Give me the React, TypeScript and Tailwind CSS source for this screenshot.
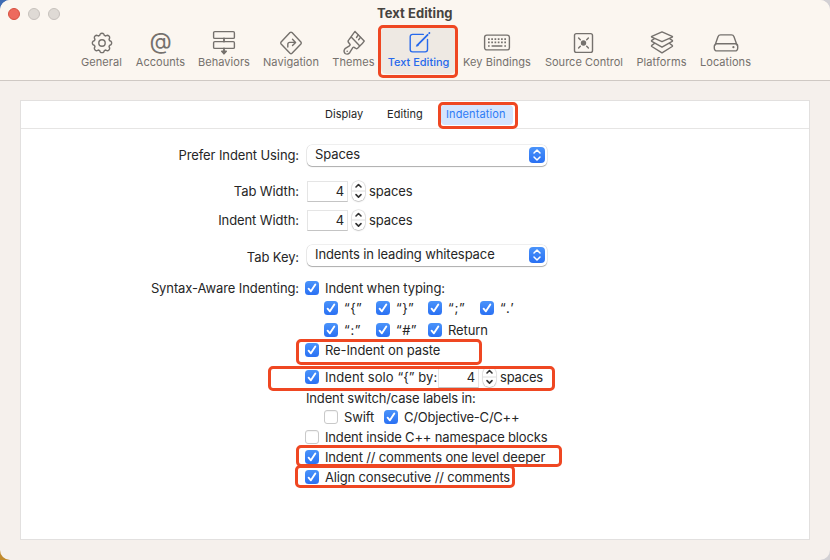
import type { ReactNode } from "react";

const icons: Record<string, ReactNode> = {
  General: (
    <>
      <path d="M12.42 4.98A2.1 2.1 0 0 1 15.58 4.98L16 6.1L17.1 6.55L18.3 6A2.1 2.1 0 0 1 20.5 8.2L19.95 9.4L20.4 10.5L21.55 11A2.1 2.1 0 0 1 21.55 14L20.4 14.5L19.95 15.6L20.5 16.8A2.1 2.1 0 0 1 18.3 19L17.1 18.45L16 18.9L15.5 20.05A2.1 2.1 0 0 1 12.5 20.05L12 18.9L10.9 18.45L9.7 19A2.1 2.1 0 0 1 7.5 16.8L8.05 15.6L7.6 14.5L6.45 14A2.1 2.1 0 0 1 6.45 11L7.6 10.5L8.05 9.4L7.5 8.2A2.1 2.1 0 0 1 9.7 6L10.9 6.55L12 6.1Z" transform="translate(0 .5) translate(14 12.5) scale(1.18) translate(-14 -12.5)" strokeWidth="1.2" />
      <circle cx="14" cy="13" r="3.2" />
    </>
  ),
  Behaviors: (
    <>
      <rect x="3.6" y="1.6" width="20.8" height="6.8" rx="1.2" />
      <rect x="3.6" y="11.6" width="20.8" height="6.8" rx="1.2" />
      <path d="M14 8.5v3M14 18.5v3" strokeWidth="1.8" />
      <path d="M11.7 21.2h4.6L14 23.9z" fill="currentColor" />
    </>
  ),
  Navigation: (
    <>
      <path d="M13 2.6Q14 1.7 15 2.6L23.9 11.9Q24.7 13 23.9 14L15 23.3Q14 24.2 13 23.3L4.1 14Q3.3 13 4.1 11.9Z" />
      <path d="M10.8 17v-2.6a2 2 0 0 1 2-2h5.2M15.5 9.3l3.1 3.1-3.1 3.1" />
    </>
  ),
  Themes: (
    <>
      <path d="M15 1.4 24.2 11.1Q22.4 13.8 19.8 16L17.6 18.2Q16.4 19.2 15.2 18.1L14.2 17.3Q13.4 16.8 12.8 17.7L9.7 22.7Q7.8 25.1 5.1 23.5 3 21.1 5 18.7L9.4 15.9Q10.5 15.1 9.9 14.2L8.4 12.3Q7.7 11.2 8.6 10.1L11.2 6.7Q13 4 15 1.4Z" />
      <path d="M11.2 6.9 19.6 15.8M18.2 4.9l-1.7 2.6M20.5 7.4l-1.9 2.4" />
      <circle cx="7.2" cy="21.3" r=".8" fill="currentColor" stroke="none" />
    </>
  ),
  "Text Editing": (
    <>
      <path d="M18.3 4.4H7.5A2.3 2.3 0 0 0 5.2 6.7v12.9a2.3 2.3 0 0 0 2.3 2.3h12.7a2.3 2.3 0 0 0 2.3-2.3V9.5" />
      <path d="M12.4 15.2 22.6 4.8" strokeWidth="1.8" />
      <path d="m11.5 16 .8-1.6.8.9z" fill="currentColor" strokeWidth=".8" />
      <path d="m24.2 3.2.2-.2" strokeWidth="1.8" />
    </>
  ),
  "Key Bindings": (
    <>
      <rect x="1.6" y="5.1" width="24.8" height="14.8" rx="2.2" />
      <path d="M5 9.2h18M5 12.4h18" strokeWidth="1.7" strokeDasharray="1.7 1.56" strokeLinecap="butt" />
      <path d="M5 16h1.7M21.3 16H23M8.6 16h10.8" strokeWidth="1.6" strokeLinecap="butt" />
    </>
  ),
  "Source Control": (
    <>
      <rect x="4.5" y="3.6" width="18" height="18.8" rx="1.9" />
      <circle cx="13.5" cy="13" r="2.7" fill="currentColor" stroke="none" />
      <path d="m8.6 8 1.7 1.7M18.4 8l-1.7 1.7M8.6 18l1.7-1.7M18.4 18l-1.7-1.7" strokeWidth="1.4" />
    </>
  ),
  Platforms: (
    <path d="M14 1.9 24.2 6.3Q24.8 6.7 24.2 7.1L14 11.7 3.8 7.1Q3.2 6.7 3.8 6.3ZM6.4 8.6 3.8 10.3Q3.2 11 3.8 11.4L14 17.2l10.2-5.8q.6-.4 0-1.1l-2.6-1.7M6.4 13.5l-2.6 1.9q-.6.6 0 1.1L14 22.8l10.2-6.3q.6-.5 0-1.1l-2.6-1.9" />
  ),
  Locations: (
    <>
      <path d="M3 15.2 6 6.7Q6.7 4.9 8.6 4.9h10.8q1.9 0 2.6 1.8l3 8.5M4.9 13.7h18.2a2.6 2.6 0 0 1 2.6 2.6v2a2.6 2.6 0 0 1-2.6 2.6H4.9a2.6 2.6 0 0 1-2.6-2.6v-2a2.6 2.6 0 0 1 2.6-2.6z" />
      <circle cx="21.4" cy="17.2" r="1.1" fill="currentColor" stroke="none" />
    </>
  ),
};

const tools = [
  ["General", "w-[55px]", "tracking-[0.1px]"],
  ["Accounts", "w-[63px]", "tracking-[0.05px]"],
  ["Behaviors", "w-[64px]", "tracking-[0.05px]"],
  ["Navigation", "w-[70px]", "tracking-[0.05px]"],
  ["Themes", "w-[55px]", "tracking-[0.1px]"],
  ["Text Editing", "w-[75px]", "tracking-[0px]"],
  ["Key Bindings", "w-[82px]", "tracking-[0.05px]"],
  ["Source Control", "w-[92px]", "tracking-[0.02px]"],
  ["Platforms", "w-[63px]", "tracking-[0.1px]"],
  ["Locations", "w-[65px]", "tracking-[0.05px]"],
];

function Tool({ name, width, tracking }: { name: string; width: string; tracking: string }) {
  const active = name === "Text Editing";
  return (
    <div className={`flex h-[47px] flex-col items-center rounded-md pt-[3px] ${width} ${active ? "bg-[#eee9e3] text-[#2769ec]" : "text-[#75716d]"}`}>
      {name === "Accounts" ? (
        <span className="h-[25px] text-[23px] leading-[23px]">@</span>
      ) : (
        <svg className="-mb-px h-[26px] w-7 shrink-0" viewBox="0 0 28 26" fill="none" stroke="currentColor" strokeWidth="1.4" strokeLinecap="round" strokeLinejoin="round">
          {icons[name]}
        </svg>
      )}
      <span className={`whitespace-nowrap text-[11px] leading-[14px] ${active ? "font-medium" : ""} ${tracking}`}>{name}</span>
    </div>
  );
}

function Check({ on = true }: { on?: boolean }) {
  if (!on) return <span className="size-[14px] shrink-0 rounded-[3px] border border-[#c9c9c9] bg-white shadow-[inset_0_1px_1px_rgba(0,0,0,0.05)]" />;
  return (
    <span className="size-[14px] shrink-0 rounded-[3.5px] bg-linear-to-b from-[#4a93fa] to-[#2a70f3]">
      <svg className="size-[14px]" viewBox="0 0 14 14" fill="none" stroke="white" strokeWidth="1.9" strokeLinecap="round" strokeLinejoin="round">
        <path d="m3.6 7.7 2.3 2.6 4.4-6.7" />
      </svg>
    </span>
  );
}

function Option({ on, width = "", tracking = "", children }: { on?: boolean; width?: string; tracking?: string; children: ReactNode }) {
  return (
    <div className={`flex shrink-0 items-center gap-1.5 whitespace-nowrap ${width}`}>
      <Check on={on} />
      <span className={tracking}>{children}</span>
    </div>
  );
}

function Label({ children }: { children: ReactNode }) {
  return <span className="w-[278px] shrink-0 text-right">{children}</span>;
}

function Select({ children }: { children: ReactNode }) {
  return (
    <div className="ml-[8px] flex h-[21px] w-[240px] items-center justify-between rounded-[5px] bg-white pr-[2px] pl-2 shadow-[0_0_0_0.5px_rgba(0,0,0,0.13),0_1px_1px_rgba(0,0,0,0.28)]">
      <span className="-mt-0.5">{children}</span>
      <svg className="size-4 rounded-[4px] bg-linear-to-b from-[#4a93fa] to-[#2a70f3]" viewBox="0 0 16 16" fill="none" stroke="white" strokeWidth="1.5" strokeLinecap="round" strokeLinejoin="round">
        <path d="m5 6 3-3 3 3M5 10l3 3 3-3" />
      </svg>
    </div>
  );
}

function Stepper() {
  return (
    <svg className="h-[20px] w-[13px] shrink-0 rounded-[6px] bg-white shadow-[0_0_0_0.5px_rgba(0,0,0,0.12),0_0.5px_1.5px_rgba(0,0,0,0.3)]" viewBox="0 0 13 20" fill="none">
      <path d="M0 10h13" stroke="#dedede" />
      <path d="m4 6 2.5-2.5L9 6M4 13.6l2.5 2.5L9 13.6" stroke="#333" strokeWidth="1.6" strokeLinecap="round" strokeLinejoin="round" />
    </svg>
  );
}

function NumberField() {
  return <span className="h-[21px] w-[41px] shrink-0 border border-[#e5e5e5] border-b-[#c4c4c4] bg-white pr-[3px] text-right leading-[19px]">4</span>;
}

function Width({ label }: { label: string }) {
  return (
    <div className="flex h-[21px] items-center">
      <span className="-mt-px flex"><Label>{label}</Label></span>
      <div className="ml-[8px] flex items-center">
        <NumberField />
        <span className="-mt-px ml-[4px] flex"><Stepper /></span>
        <span className="-mt-px ml-[4px]">spaces</span>
      </div>
    </div>
  );
}

const highlights = [
  "left-[378px] top-[25px] h-[53px] w-[80px]",
  "left-[438px] top-[102px] h-[27px] w-[80px]",
  "left-[296px] top-[339px] h-[26px] w-[186px]",
  "left-[268px] top-[366px] h-[25px] w-[287px]",
  "left-[296px] top-[445px] h-[22px] w-[266px]",
  "left-[295px] top-[465px] h-[23px] w-[220px]",
];

export default function App() {
  return (
    <div className="relative h-[560px] w-[830px] overflow-hidden bg-[linear-gradient(90deg,#3f6cb4_50%,#d2d0d4_50%)] font-['Inter',sans-serif]">
      <div className="absolute bottom-0 left-0 size-5 bg-[#c08a2c]" />
      <div className="relative flex h-full flex-col overflow-hidden rounded-[10px] bg-[#f5f0ec]">
        <header className="h-[81px] shrink-0 border-b border-[#cfc9c4] bg-[#fbf6f0]">
          <div className="flex h-[27px] items-center pl-2">
            <div className="flex w-[369px] gap-2">
              <span className="size-3 rounded-full border border-[#d6503f] bg-[#ed6a5e]" />
              <span className="size-3 rounded-full border border-[#c6c1bc] bg-[#dfdad5]" />
              <span className="size-3 rounded-full border border-[#c6c1bc] bg-[#dfdad5]" />
            </div>
            <h1 className="text-[13px] font-bold tracking-[0.06px] whitespace-nowrap text-[#464340]">Text Editing</h1>
          </div>
          <nav className="flex pl-[74px]">
            {tools.map(([name, width, tracking]) => (
              <Tool key={name} name={name} width={width} tracking={tracking} />
            ))}
          </nav>
        </header>
        <main className="mx-5 mt-[19px] h-[440px] border border-[#e2e0df] bg-white text-[13px] leading-5 tracking-[-0.1px] text-[#262626]">
          <div className="flex h-7 items-center border-b border-[#e6e5e4] pl-[304px] text-[11px] tracking-[0.05px]">
            <span className="w-[62px] pb-0.5">Display</span>
            <span className="w-[54px] pb-0.5">Editing</span>
            <span className="flex h-5 w-[72px] items-center rounded-[4px] bg-[#d4e4fd] pb-0.5 pl-[5px] tracking-[0.12px] text-[#2e7cf6]">Indentation</span>
          </div>
          <div className="flex flex-col pt-[15px]">
            <div className="flex h-[22px] items-center">
              <Label>Prefer Indent Using:</Label>
              <Select>Spaces</Select>
            </div>
            <div className="mt-[15px] flex flex-col gap-2">
              <Width label="Tab Width:" />
              <Width label="Indent Width:" />
            </div>
            <div className="mt-[13px] flex h-[22px] items-center">
              <span className="flex pt-[4px]"><Label>Tab Key:</Label></span>
              <Select>Indents in leading whitespace</Select>
            </div>
            <div className="mt-[12px] flex">
              <Label>Syntax-Aware Indenting:</Label>
              <div className="ml-[6px] flex flex-col">
                <Option>Indent when typing:</Option>
                <div className="flex pl-[19px]">
                  <Option width="w-[52px]" tracking="tracking-[0.4px]">“&#123;”</Option>
                  <Option width="w-[52px]" tracking="tracking-[0.4px]">“&#125;”</Option>
                  <Option width="w-[52px]" tracking="tracking-[0.7px]">“;”</Option>
                  <Option tracking="tracking-[1.3px]">“.’</Option>
                </div>
                <div className="mt-0.5 flex pl-[19px]">
                  <Option width="w-[52px]" tracking="tracking-[0.7px]">“:”</Option>
                  <Option width="w-[52px]" tracking="tracking-[0.4px]">“#”</Option>
                  <Option>Return</Option>
                </div>
                <Option>Re-Indent on paste</Option>
                <div className="mt-[7px] flex h-5 items-center">
                  <Option width="w-[133px]" tracking="tracking-[0.07px]">Indent solo “&#123;” by:</Option>
                  <NumberField />
                  <span className="-mt-px ml-[4px] flex"><Stepper /></span>
                  <span className="ml-[4px] tracking-[-0.2px]">spaces</span>
                </div>
                <span className="mt-px h-[19px] pl-px tracking-[-0.15px]">Indent switch/case labels in:</span>
                <div className="flex pl-[19px]">
                  <Option on={false} width="w-[60px]">Swift</Option>
                  <Option tracking="tracking-[-0.22px]">C/Objective-C/C++</Option>
                </div>
                <Option on={false} tracking="tracking-[-0.16px]">Indent inside C++ namespace blocks</Option>
                <Option tracking="tracking-[-0.15px]">Indent // comments one level deeper</Option>
                <Option tracking="tracking-[-0.17px]">Align consecutive // comments</Option>
              </div>
            </div>
          </div>
        </main>
      </div>
      {highlights.map((place) => (
        <div key={place} className={`pointer-events-none absolute rounded-[5px] border-3 border-[#ef4722] ${place}`} />
      ))}
    </div>
  );
}
